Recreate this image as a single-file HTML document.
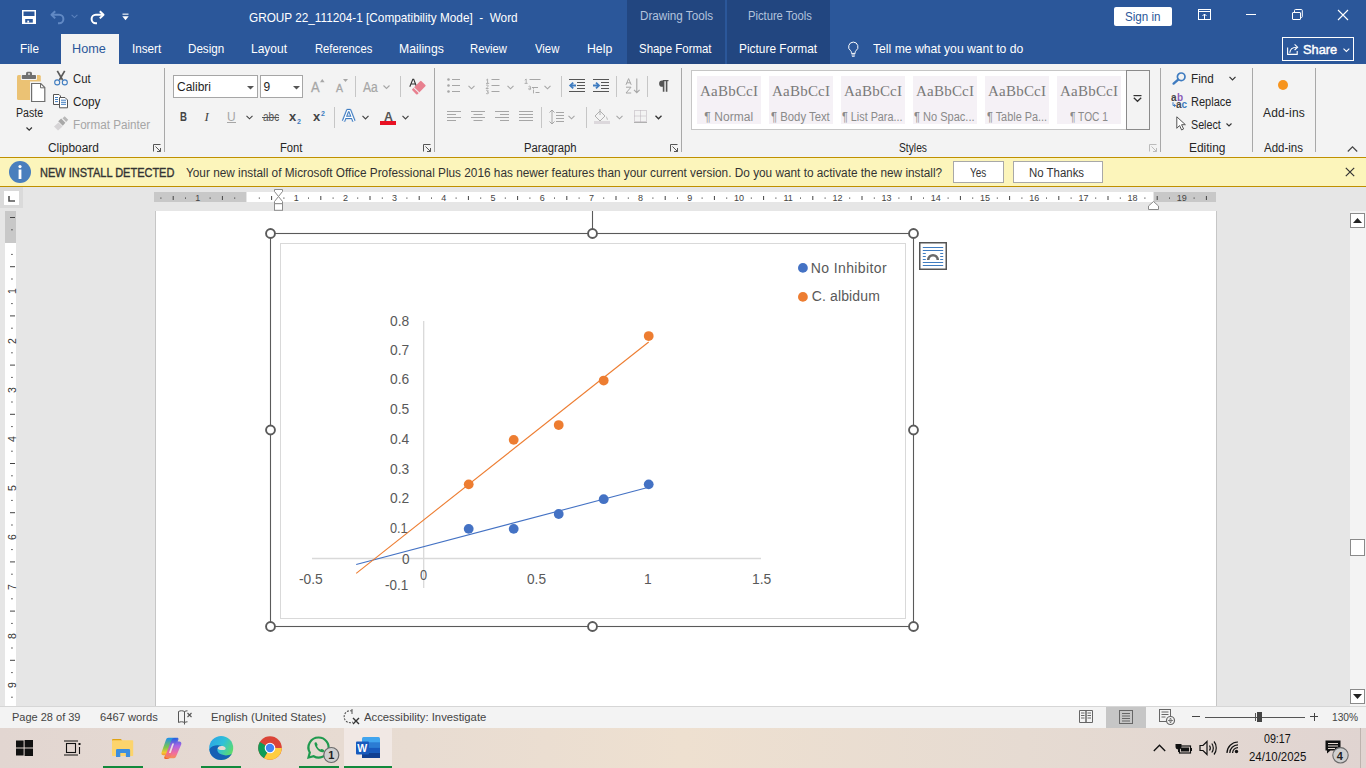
<!DOCTYPE html>
<html><head><meta charset="utf-8"><title>GROUP 22_111204-1 [Compatibility Mode] - Word</title>
<style>
html,body{margin:0;padding:0;}
body{width:1366px;height:768px;overflow:hidden;position:relative;background:#e6e6e6;font-family:"Liberation Sans",sans-serif;}
.t{position:absolute;line-height:1;white-space:pre;}
svg{overflow:visible}
</style></head><body>
<div style="position:absolute;left:0px;top:0px;width:1366px;height:64px;background:#2b579a;"></div>
<div style="position:absolute;left:627px;top:0px;width:98px;height:64px;background:#224680;"></div>
<div style="position:absolute;left:727px;top:0px;width:103px;height:64px;background:#224680;"></div>
<div style="position:absolute;left:61px;top:34px;width:58px;height:30px;background:#f3f3f3;"></div>
<svg style="position:absolute;left:22px;top:10px;" width="14" height="14" viewBox="0 0 14 14"><path d="M0.75 0.75h12.5v12.5H0.75z" fill="none" stroke="#fff" stroke-width="1.5"/><rect x="1" y="6" width="12" height="7.5" fill="#fff"/><rect x="3.2" y="9" width="7.6" height="3.6" fill="#2b579a"/><rect x="5.3" y="10.6" width="1.8" height="2" fill="#fff"/></svg>
<svg style="position:absolute;left:50px;top:10px;" width="16" height="14" viewBox="0 0 16 14"><path d="M5.2 1.2L1.5 4.8 5.2 8.4" fill="none" stroke="#6189c4" stroke-width="2" stroke-linejoin="round"/><path d="M2 4.8h7.2a4.2 4.2 0 0 1 0 8.4H8" fill="none" stroke="#6189c4" stroke-width="2"/></svg>
<svg style="position:absolute;left:71px;top:14px;" width="7" height="5" viewBox="0 0 7 5"><path d="M0.6 0.8L3.5 3.6 6.4 0.8" fill="none" stroke="#5b82bd" stroke-width="1.1"/></svg>
<svg style="position:absolute;left:90px;top:10px;" width="15" height="14" viewBox="0 0 15 14"><path d="M9.8 1.2L13.5 4.8 9.8 8.4" fill="none" stroke="#fff" stroke-width="2" stroke-linejoin="round"/><path d="M13 4.8H5.8a4.2 4.2 0 0 0 0 8.4H7" fill="none" stroke="#fff" stroke-width="2"/></svg>
<svg style="position:absolute;left:122px;top:13px;" width="7" height="8" viewBox="0 0 7 8"><rect x="0.5" y="0.6" width="6" height="1.1" fill="#fff"/><path d="M0.3 3.3h6.4L3.5 7.2z" fill="#fff"/></svg>
<div style="position:absolute;left:1114px;top:7px;width:58px;height:19px;background:#fff;border-radius:2px;"></div>
<svg style="position:absolute;left:1198px;top:9px;" width="14" height="12" viewBox="0 0 14 12"><rect x="0.5" y="0.5" width="12" height="10" fill="none" stroke="#fff" stroke-width="1"/><path d="M0.5 2.5h12" stroke="#fff"/><path d="M6.5 10.5V5M4.5 7l2-2 2 2" fill="none" stroke="#fff"/></svg>
<div style="position:absolute;left:1246px;top:14px;width:10px;height:1px;background:#fff;"></div>
<svg style="position:absolute;left:1292px;top:9px;" width="11" height="12" viewBox="0 0 11 12"><rect x="0.5" y="3.5" width="8" height="7" rx="0.5" fill="none" stroke="#fff"/><path d="M2.5 3.5V1.5a1 1 0 0 1 1-1h5.8a1 1 0 0 1 1 1v6a1 1 0 0 1-1 1H8.5" fill="none" stroke="#fff"/></svg>
<svg style="position:absolute;left:1337px;top:9px;" width="12" height="12" viewBox="0 0 12 12"><path d="M1 1l10 10M11 1L1 11" stroke="#fff" stroke-width="1.1"/></svg>
<svg style="position:absolute;left:847.2px;top:41.2px;" width="14" height="18" viewBox="0 0 14 18"><g transform="scale(0.9)"><path d="M7 1.2a5.3 5.3 0 0 0-3 9.6c.6.5.9 1.2.9 2v1h4.2v-1c0-.8.3-1.5.9-2A5.3 5.3 0 0 0 7 1.2z" fill="none" stroke="#fff" stroke-width="1.1"/><path d="M5 15.5h4M5.5 17h3" stroke="#fff" stroke-width="1"/></g></svg>
<div style="position:absolute;left:1282px;top:37px;width:72px;height:24px;background:transparent;border:1px solid #fff;box-sizing:border-box;"></div>
<svg style="position:absolute;left:1287px;top:43px;" width="12" height="12" viewBox="0 0 12 12"><path d="M0.6 4.5V11.4H10.2V8" fill="none" stroke="#fff" stroke-width="1.1"/><path d="M2.8 9.8C3 6.5 5.2 4.2 9.8 4.2" fill="none" stroke="#fff" stroke-width="1.1"/><path d="M7.6 1.4L10.6 4.2 7.6 7" fill="none" stroke="#fff" stroke-width="1.1"/></svg>
<svg style="position:absolute;left:1343px;top:47.5px;" width="7" height="4" viewBox="0 0 7 4"><path d="M0.5 0.6L3.4 3.4 6.3 0.6" fill="none" stroke="#fff" stroke-width="1.1"/></svg>
<div style="position:absolute;left:0px;top:64px;width:1366px;height:93px;background:#f3f3f3;"></div>
<div style="position:absolute;left:164px;top:68px;width:1px;height:84px;background:#a8a8a8;"></div>
<div style="position:absolute;left:434px;top:68px;width:1px;height:84px;background:#a8a8a8;"></div>
<div style="position:absolute;left:681px;top:68px;width:1px;height:84px;background:#a8a8a8;"></div>
<div style="position:absolute;left:1160px;top:68px;width:1px;height:84px;background:#a8a8a8;"></div>
<div style="position:absolute;left:1252px;top:68px;width:1px;height:84px;background:#a8a8a8;"></div>
<div style="position:absolute;left:1315px;top:68px;width:1px;height:84px;background:#a8a8a8;"></div>
<svg style="position:absolute;left:17px;top:71px;" width="29" height="31" viewBox="0 0 29 31"><rect x="0" y="4" width="23.8" height="25" rx="1.5" fill="#ebc274"/><rect x="3.8" y="3" width="16.2" height="6" rx="1" fill="#f3f3f3"/><rect x="4.8" y="4" width="14.2" height="4" rx="0.8" fill="#707070"/><rect x="9" y="0.8" width="6" height="4.5" rx="1.5" fill="#707070"/><rect x="11.2" y="2.2" width="1.6" height="1.6" fill="#f3f3f3"/><rect x="13" y="10.5" width="15.5" height="20" fill="#f3f3f3"/><path d="M14.6 12.5h9.2l4 4v14h-13.2z" fill="#fff" stroke="#6e6e6e" stroke-width="1.2"/><path d="M23.5 12.5v4.3h4.3" fill="none" stroke="#6e6e6e" stroke-width="1"/></svg>
<svg style="position:absolute;left:25.5px;top:126.5px;" width="7" height="4" viewBox="0 0 7 4"><path d="M0.5 0.5L3.2 3.2 5.9 0.5" fill="none" stroke="#333" stroke-width="1.2"/></svg>
<svg style="position:absolute;left:54px;top:70px;" width="14" height="16" viewBox="0 0 14 16"><path d="M3.3 0.8l5.3 9.2M10.7 0.8L5.4 10" stroke="#5a5a5a" stroke-width="1.7"/><circle cx="3.2" cy="12.4" r="2.5" fill="#f3f3f3" stroke="#3f7cc0" stroke-width="1.1"/><circle cx="10.8" cy="12.4" r="2.5" fill="#f3f3f3" stroke="#3f7cc0" stroke-width="1.1"/></svg>
<svg style="position:absolute;left:53px;top:94px;" width="16" height="15" viewBox="0 0 16 15"><path d="M0.5 0.5h5.5l1.5 1.5v8.5h-7z" fill="#fff" stroke="#555" stroke-width="1"/><path d="M6.5 3.5h5.5l2.5 2.5v7.8h-8z" fill="#fff" stroke="#555" stroke-width="1"/><path d="M2 3.5h3M2 5.5h3M2 7.6h3M8 6.2h5M8 8.3h5M8 10.3h5" stroke="#3f7cc0" stroke-width="1"/></svg>
<svg style="position:absolute;left:53px;top:116px;" width="16" height="15" viewBox="0 0 16 15"><path d="M1 10.5l4.5-4 4 4-4.5 4z" fill="#d6d4d6"/><path d="M5.2 5.2l3-2.6 4.2 4.2-2.6 3z" fill="#a8a8a8"/><path d="M9.5 2.2l2.2-2 3.5 3.5-2 2.2z" fill="#b8b8b8"/></svg>
<svg style="position:absolute;left:153px;top:144px;" width="8" height="8" viewBox="0 0 8 8"><path d="M0.5 7.5V0.5h7" fill="none" stroke="#555"/><path d="M2.5 2.5l5 5M7.5 4v3.5H4" fill="none" stroke="#555"/></svg>
<svg style="position:absolute;left:423px;top:144px;" width="8" height="8" viewBox="0 0 8 8"><path d="M0.5 7.5V0.5h7" fill="none" stroke="#555"/><path d="M2.5 2.5l5 5M7.5 4v3.5H4" fill="none" stroke="#555"/></svg>
<svg style="position:absolute;left:670px;top:144px;" width="8" height="8" viewBox="0 0 8 8"><path d="M0.5 7.5V0.5h7" fill="none" stroke="#555"/><path d="M2.5 2.5l5 5M7.5 4v3.5H4" fill="none" stroke="#555"/></svg>
<svg style="position:absolute;left:1149px;top:144px;" width="8" height="8" viewBox="0 0 8 8"><path d="M0.5 7.5V0.5h7" fill="none" stroke="#bbb"/><path d="M2.5 2.5l5 5M7.5 4v3.5H4" fill="none" stroke="#bbb"/></svg>
<div style="position:absolute;left:173px;top:75px;width:85px;height:23px;background:#fff;border:1px solid #a6a6a6;box-sizing:border-box;"></div>
<div style="position:absolute;left:260px;top:75px;width:43px;height:23px;background:#fff;border:1px solid #a6a6a6;box-sizing:border-box;"></div>
<svg style="position:absolute;left:247px;top:86px;" width="7" height="4" viewBox="0 0 7 4"><path d="M0 0h7L3.5 3.5z" fill="#555"/></svg>
<svg style="position:absolute;left:293px;top:86px;" width="7" height="4" viewBox="0 0 7 4"><path d="M0 0h7L3.5 3.5z" fill="#555"/></svg>
<svg style="position:absolute;left:319.5px;top:78.7px;" width="5" height="4" viewBox="0 0 5 4"><path d="M0 3.3L2.3 0 4.6 3.3z" fill="#a6a6a6"/></svg>
<svg style="position:absolute;left:343px;top:79px;" width="5" height="4" viewBox="0 0 5 4"><path d="M0 0h5L2.5 3z" fill="#a6a6a6"/></svg>
<div style="position:absolute;left:355px;top:76px;width:1px;height:21px;background:#c6c6c6;"></div>
<svg style="position:absolute;left:383px;top:85px;" width="7" height="4" viewBox="0 0 7 4"><path d="M0.5 0.5L3.5 3.5 6.5 0.5" fill="none" stroke="#a6a6a6" stroke-width="1.1"/></svg>
<div style="position:absolute;left:400px;top:76px;width:1px;height:21px;background:#c6c6c6;"></div>
<svg style="position:absolute;left:409px;top:78px;" width="17" height="17" viewBox="0 0 17 17"><path d="M0.8 8.8L3.8 1.2h0.9L7.6 8.8M1.9 6h4.6" fill="none" stroke="#333" stroke-width="1.1"/><g transform="rotate(-45 9.5 10)"><rect x="3.5" y="6.3" width="13" height="7.4" rx="1" fill="#e8808f"/><rect x="6" y="6" width="1" height="8" fill="#f3f3f3"/></g></svg>
<div style="position:absolute;left:227px;top:122px;width:9px;height:1px;background:#a6a6a6;"></div>
<svg style="position:absolute;left:246px;top:115px;" width="7" height="5" viewBox="0 0 7 5"><path d="M0.5 0.8L3.5 3.8 6.5 0.8" fill="none" stroke="#444" stroke-width="1.1"/></svg>
<div style="position:absolute;left:262px;top:117px;width:17px;height:1px;background:#555;"></div>
<div style="position:absolute;left:334px;top:107px;width:1px;height:21px;background:#c6c6c6;"></div>
<svg style="position:absolute;left:342.4px;top:108.6px;" width="16" height="17" viewBox="0 0 16 17"><g transform="scale(0.84)"><path d="M1.8 14.5L6.8 1.8h2.4l5 12.7M4.3 10h7.4" fill="none" stroke="#8fb3de" stroke-width="5" stroke-linejoin="round" opacity="0.55"/><path d="M1.8 14.5L6.8 1.8h2.4l5 12.7M4.3 10h7.4" fill="none" stroke="#3f7cc0" stroke-width="3.8" stroke-linejoin="round"/><path d="M1.8 14.5L6.8 1.8h2.4l5 12.7M4.3 10h7.4" fill="none" stroke="#fff" stroke-width="1.5" stroke-linejoin="round"/></g></svg>
<svg style="position:absolute;left:362px;top:115px;" width="7" height="5" viewBox="0 0 7 5"><path d="M0.5 0.8L3.5 3.8 6.5 0.8" fill="none" stroke="#444" stroke-width="1.2"/></svg>
<div style="position:absolute;left:380px;top:121px;width:16px;height:4px;background:#e81123;"></div>
<svg style="position:absolute;left:402px;top:115px;" width="7" height="5" viewBox="0 0 7 5"><path d="M0.5 0.8L3.5 3.8 6.5 0.8" fill="none" stroke="#444" stroke-width="1.2"/></svg>
<svg style="position:absolute;left:447px;top:78px;" width="14" height="15" viewBox="0 0 14 15"><circle cx="1.5" cy="1.5" r="1.3" fill="#a6a6a6"/><circle cx="1.5" cy="7.5" r="1.3" fill="#a6a6a6"/><circle cx="1.5" cy="13.5" r="1.3" fill="#a6a6a6"/><rect x="5" y="1" width="8" height="1" fill="#a6a6a6"/><rect x="5" y="7" width="8" height="1" fill="#a6a6a6"/><rect x="5" y="13" width="8" height="1" fill="#a6a6a6"/></svg>
<svg style="position:absolute;left:468px;top:85px;" width="7" height="5" viewBox="0 0 7 5"><path d="M0.5 0.8L3.5 3.8 6.5 0.8" fill="none" stroke="#a6a6a6" stroke-width="1.1"/></svg>
<svg style="position:absolute;left:485px;top:78px;" width="16" height="16" viewBox="0 0 16 16"><path d="M1.2 2.2L2.6 1v4.2M1 5.4h3.2M1 7.6c.4-.8 2.4-.8 2.4.3 0 .9-2.4 2.1-2.4 2.6h2.6M1 12.6c.6-.6 2.4-.6 2.4.5 0 .6-.8.8-1.4.8.8 0 1.6.3 1.6 1 0 1-1.8 1-2.6.5" fill="none" stroke="#a6a6a6" stroke-width="0.9"/><rect x="6.5" y="1" width="8" height="1" fill="#a6a6a6"/><rect x="6.5" y="7" width="8" height="1" fill="#a6a6a6"/><rect x="6.5" y="13" width="8" height="1" fill="#a6a6a6"/></svg>
<svg style="position:absolute;left:507px;top:85px;" width="7" height="5" viewBox="0 0 7 5"><path d="M0.5 0.8L3.5 3.8 6.5 0.8" fill="none" stroke="#a6a6a6" stroke-width="1.1"/></svg>
<svg style="position:absolute;left:524px;top:78px;" width="17" height="16" viewBox="0 0 17 16"><path d="M0.8 2.2L2.2 1v4.2M0.6 5.4h3M4.6 8.5c.5-.5 2-.5 2 .4v2.6M6.6 10.5c-.8-.6-2-.4-2 .4s1.2 1 2 .3M9.5 11.6v3.8M9.5 10v.8" fill="none" stroke="#a6a6a6" stroke-width="0.9"/><rect x="5.5" y="1" width="11" height="1" fill="#a6a6a6"/><rect x="8" y="9" width="6" height="1" fill="#a6a6a6"/><rect x="11.5" y="14" width="4" height="1" fill="#a6a6a6"/></svg>
<svg style="position:absolute;left:544px;top:85px;" width="7" height="5" viewBox="0 0 7 5"><path d="M0.5 0.8L3.5 3.8 6.5 0.8" fill="none" stroke="#a6a6a6" stroke-width="1.1"/></svg>
<div style="position:absolute;left:561px;top:76px;width:1px;height:21px;background:#c6c6c6;"></div>
<svg style="position:absolute;left:569px;top:79px;" width="17" height="14" viewBox="0 0 17 14"><rect x="0" y="0" width="16" height="1" fill="#555"/><rect x="8" y="3" width="8" height="1" fill="#555"/><rect x="8" y="6" width="8" height="1" fill="#555"/><rect x="8" y="9" width="8" height="1" fill="#555"/><rect x="0" y="12" width="16" height="1" fill="#555"/><path d="M1.5 6.5h5.5" stroke="#3f7cc0" stroke-width="2"/><path d="M4.2 3.6L1.2 6.5 4.2 9.4" fill="none" stroke="#3f7cc0" stroke-width="1.8"/></svg>
<svg style="position:absolute;left:593px;top:79px;" width="17" height="14" viewBox="0 0 17 14"><rect x="0" y="0" width="16" height="1" fill="#555"/><rect x="8" y="3" width="8" height="1" fill="#555"/><rect x="8" y="6" width="8" height="1" fill="#555"/><rect x="8" y="9" width="8" height="1" fill="#555"/><rect x="0" y="12" width="16" height="1" fill="#555"/><path d="M0 6.5h5.5" stroke="#3f7cc0" stroke-width="2"/><path d="M3 3.6L6 6.5 3 9.4" fill="none" stroke="#3f7cc0" stroke-width="1.8"/></svg>
<div style="position:absolute;left:616px;top:76px;width:1px;height:21px;background:#c6c6c6;"></div>
<svg style="position:absolute;left:625px;top:78px;" width="15" height="16" viewBox="0 0 15 16"><path d="M1 6.8L3.6 0.6 6.2 6.8M1.9 4.8h3.4M1 9.2h5L1 15h5.2" fill="none" stroke="#a6a6a6" stroke-width="1"/><path d="M11.8 0.5v14M9 11.8l2.8 2.8 2.8-2.8" fill="none" stroke="#a6a6a6" stroke-width="1.1"/></svg>
<div style="position:absolute;left:647px;top:76px;width:1px;height:21px;background:#c6c6c6;"></div>
<svg style="position:absolute;left:658px;top:80px;" width="11" height="12" viewBox="0 0 11 12"><path d="M5 0.6h5.5" stroke="#555" stroke-width="1.2"/><path d="M4.2 0.6A3.1 3.1 0 0 0 4.2 6.8h1V0.6z" fill="#555"/><path d="M5.6 0.6v11.2M8.6 0.6v11.2" stroke="#555" stroke-width="1.6"/></svg>
<svg style="position:absolute;left:447px;top:111px;" width="15" height="11" viewBox="0 0 15 11"><rect x="0" y="0" width="14" height="1" fill="#a6a6a6"/><rect x="0" y="3" width="9" height="1" fill="#a6a6a6"/><rect x="0" y="6" width="14" height="1" fill="#a6a6a6"/><rect x="0" y="9" width="9" height="1" fill="#a6a6a6"/></svg>
<svg style="position:absolute;left:471px;top:111px;" width="15" height="11" viewBox="0 0 15 11"><rect x="0.0" y="0" width="14" height="1" fill="#a6a6a6"/><rect x="2.5" y="3" width="9" height="1" fill="#a6a6a6"/><rect x="0.0" y="6" width="14" height="1" fill="#a6a6a6"/><rect x="2.5" y="9" width="9" height="1" fill="#a6a6a6"/></svg>
<svg style="position:absolute;left:495px;top:111px;" width="15" height="11" viewBox="0 0 15 11"><rect x="0" y="0" width="14" height="1" fill="#a6a6a6"/><rect x="5" y="3" width="9" height="1" fill="#a6a6a6"/><rect x="0" y="6" width="14" height="1" fill="#a6a6a6"/><rect x="5" y="9" width="9" height="1" fill="#a6a6a6"/></svg>
<svg style="position:absolute;left:519px;top:111px;" width="15" height="11" viewBox="0 0 15 11"><rect x="0" y="0" width="14" height="1" fill="#a6a6a6"/><rect x="0" y="3" width="14" height="1" fill="#a6a6a6"/><rect x="0" y="6" width="14" height="1" fill="#a6a6a6"/><rect x="0" y="9" width="14" height="1" fill="#a6a6a6"/></svg>
<div style="position:absolute;left:541px;top:107px;width:1px;height:21px;background:#c6c6c6;"></div>
<svg style="position:absolute;left:549px;top:109px;" width="16" height="16" viewBox="0 0 16 16"><path d="M3 1v14M0.5 3.5L3 1l2.5 2.5M0.5 12.5L3 15l2.5-2.5" fill="none" stroke="#a6a6a6" stroke-width="1"/><rect x="7" y="3" width="8" height="1" fill="#a6a6a6"/><rect x="7" y="6" width="8" height="1" fill="#a6a6a6"/><rect x="7" y="9" width="8" height="1" fill="#a6a6a6"/><rect x="7" y="12" width="8" height="1" fill="#a6a6a6"/></svg>
<svg style="position:absolute;left:568px;top:115px;" width="7" height="5" viewBox="0 0 7 5"><path d="M0.5 0.8L3.5 3.8 6.5 0.8" fill="none" stroke="#a6a6a6" stroke-width="1.1"/></svg>
<div style="position:absolute;left:586px;top:107px;width:1px;height:21px;background:#c6c6c6;"></div>
<svg style="position:absolute;left:594px;top:109px;" width="17" height="16" viewBox="0 0 17 16"><path d="M1 7l5-5 5 5-5 5z" fill="none" stroke="#b0b0b0" stroke-width="1"/><path d="M6 0v6" stroke="#b0b0b0"/><path d="M12 7c2 2 2 4 1 4" fill="#b0b0b0"/><rect x="0" y="12" width="16" height="3" fill="#dcd8dc"/></svg>
<svg style="position:absolute;left:616px;top:115px;" width="7" height="5" viewBox="0 0 7 5"><path d="M0.5 0.8L3.5 3.8 6.5 0.8" fill="none" stroke="#a6a6a6" stroke-width="1.1"/></svg>
<svg style="position:absolute;left:634px;top:110px;" width="14" height="13" viewBox="0 0 14 13"><path d="M0.5 0.5h12v11h-12zM6.5 0.5v11M0.5 6h12" fill="none" stroke="#b8b0b8" stroke-width="1" stroke-dasharray="1 1"/><rect x="0" y="12" width="13" height="1" fill="#b0b0b0"/></svg>
<svg style="position:absolute;left:655px;top:115px;" width="7" height="5" viewBox="0 0 7 5"><path d="M0.5 0.8L3.5 3.8 6.5 0.8" fill="none" stroke="#333" stroke-width="1.3"/></svg>
<div style="position:absolute;left:691px;top:70px;width:459px;height:60px;background:#fff;border:1px solid #c6c6c6;box-sizing:border-box;"></div>
<div style="position:absolute;left:697px;top:76px;width:64px;height:48px;background:#f5f1f6;"></div>
<div style="position:absolute;left:769px;top:76px;width:64px;height:48px;background:#f5f1f6;"></div>
<div style="position:absolute;left:841px;top:76px;width:64px;height:48px;background:#f5f1f6;"></div>
<div style="position:absolute;left:913px;top:76px;width:64px;height:48px;background:#f5f1f6;"></div>
<div style="position:absolute;left:985px;top:76px;width:64px;height:48px;background:#f5f1f6;"></div>
<div style="position:absolute;left:1057px;top:76px;width:64px;height:48px;background:#f5f1f6;"></div>
<div style="position:absolute;left:1126px;top:70px;width:24px;height:60px;background:#f3f3f3;border:1px solid #8a8a8a;box-sizing:border-box;"></div>
<svg style="position:absolute;left:1133px;top:95px;" width="9" height="7" viewBox="0 0 9 7"><rect x="0.5" y="0" width="8" height="1.2" fill="#333"/><path d="M0.8 2.8L4.5 6.3 8.2 2.8" fill="none" stroke="#333" stroke-width="1.3"/></svg>
<svg style="position:absolute;left:1172px;top:72px;" width="15" height="13" viewBox="0 0 15 13"><circle cx="9.2" cy="4.8" r="3.8" fill="none" stroke="#3f7cc0" stroke-width="1.7"/><path d="M6.2 7.6L1.6 11.6" stroke="#3f7cc0" stroke-width="2.4" stroke-linecap="round"/></svg>
<svg style="position:absolute;left:1229px;top:76px;" width="7" height="5" viewBox="0 0 7 5"><path d="M0.5 0.8L3.5 3.8 6.5 0.8" fill="none" stroke="#333" stroke-width="1.2"/></svg>
<svg style="position:absolute;left:1171px;top:93px;" width="18" height="16" viewBox="0 0 18 16"><text x="0" y="7.6" font-size="10" font-weight="700" fill="#444" font-family="Liberation Sans">a</text><text x="6" y="7.6" font-size="10" font-weight="700" fill="#8a5cb8" font-family="Liberation Sans">b</text><text x="5" y="15.2" font-size="10" font-weight="700" fill="#444" font-family="Liberation Sans">a</text><text x="10.6" y="15.2" font-size="10" font-weight="700" fill="#3f7cc0" font-family="Liberation Sans">c</text><path d="M2 9.2v3.3h2.6M3.2 11.2l1.5 1.3-1.5 1.3" fill="none" stroke="#3f7cc0" stroke-width="1"/></svg>
<svg style="position:absolute;left:1176px;top:116px;" width="10" height="15" viewBox="0 0 10 15"><path d="M0.8 0.8v11.5l2.8-2.8 2 4.5 2-1-2-4.3h3.8z" fill="#fff" stroke="#555" stroke-width="1"/></svg>
<svg style="position:absolute;left:1226px;top:123px;" width="6" height="4" viewBox="0 0 6 4"><path d="M0.5 0.5L3 3 5.5 0.5" fill="none" stroke="#333" stroke-width="1.1"/></svg>
<svg style="position:absolute;left:1277px;top:79px;" width="12" height="12" viewBox="0 0 12 12"><circle cx="6" cy="6" r="5" fill="#f7941d"/></svg>
<svg style="position:absolute;left:1347px;top:146px;" width="11" height="6" viewBox="0 0 11 6"><path d="M0.8 5.5L5.5 0.8 10.2 5.5" fill="none" stroke="#444" stroke-width="1.2"/></svg>
<div style="position:absolute;left:0px;top:157px;width:1366px;height:30px;background:#fcf5bb;border-top:1px solid #bf9000;border-bottom:1px solid #bf9000;box-sizing:border-box;"></div>
<svg style="position:absolute;left:9px;top:161px;" width="22" height="22" viewBox="0 0 22 22"><circle cx="11" cy="11" r="11" fill="#4a7fbd"/><circle cx="11" cy="5.6" r="1.6" fill="#fff"/><rect x="9.6" y="8.5" width="2.8" height="9.5" fill="#fff"/></svg>
<div style="position:absolute;left:953px;top:161px;width:51px;height:22px;background:#fff;border:1px solid #a8a8a8;box-sizing:border-box;"></div>
<div style="position:absolute;left:1013px;top:161px;width:90px;height:22px;background:#fff;border:1px solid #a8a8a8;box-sizing:border-box;"></div>
<svg style="position:absolute;left:1345px;top:167px;" width="10" height="10" viewBox="0 0 10 10"><path d="M0.8 0.8l8.4 8.4M9.2 0.8L0.8 9.2" stroke="#333" stroke-width="1.2"/></svg>
<div style="position:absolute;left:0px;top:187px;width:23px;height:21px;background:#dadada;"></div>
<div style="position:absolute;left:4px;top:191px;width:15px;height:14px;background:#fff;"></div>
<svg style="position:absolute;left:8px;top:196px;" width="7" height="6" viewBox="0 0 7 6"><path d="M1 0v5h6" fill="none" stroke="#555" stroke-width="1.6"/></svg>
<div style="position:absolute;left:154px;top:192px;width:92px;height:10px;background:#c8c8c8;"></div>
<div style="position:absolute;left:247px;top:192px;width:906px;height:10px;background:#fff;"></div>
<div style="position:absolute;left:1154px;top:192px;width:62px;height:10px;background:#c8c8c8;"></div>
<svg style="position:absolute;left:154px;top:192px;" width="1062" height="10" viewBox="0 0 1062 10"><rect x="6.40" y="5.5" width="1" height="1.2" fill="#444"/><rect x="18.70" y="4" width="1" height="4" fill="#444"/><rect x="31.00" y="5.5" width="1" height="1.2" fill="#444"/><rect x="55.60" y="5.5" width="1" height="1.2" fill="#444"/><rect x="67.90" y="4" width="1" height="4" fill="#444"/><rect x="80.20" y="5.5" width="1" height="1.2" fill="#444"/><rect x="104.80" y="5.5" width="1" height="1.2" fill="#444"/><rect x="117.10" y="4" width="1" height="4" fill="#444"/><rect x="129.40" y="5.5" width="1" height="1.2" fill="#444"/><rect x="154.00" y="5.5" width="1" height="1.2" fill="#444"/><rect x="166.30" y="4" width="1" height="4" fill="#444"/><rect x="178.60" y="5.5" width="1" height="1.2" fill="#444"/><rect x="203.20" y="5.5" width="1" height="1.2" fill="#444"/><rect x="215.50" y="4" width="1" height="4" fill="#444"/><rect x="227.80" y="5.5" width="1" height="1.2" fill="#444"/><rect x="252.40" y="5.5" width="1" height="1.2" fill="#444"/><rect x="264.70" y="4" width="1" height="4" fill="#444"/><rect x="277.00" y="5.5" width="1" height="1.2" fill="#444"/><rect x="301.60" y="5.5" width="1" height="1.2" fill="#444"/><rect x="313.90" y="4" width="1" height="4" fill="#444"/><rect x="326.20" y="5.5" width="1" height="1.2" fill="#444"/><rect x="350.80" y="5.5" width="1" height="1.2" fill="#444"/><rect x="363.10" y="4" width="1" height="4" fill="#444"/><rect x="375.40" y="5.5" width="1" height="1.2" fill="#444"/><rect x="400.00" y="5.5" width="1" height="1.2" fill="#444"/><rect x="412.30" y="4" width="1" height="4" fill="#444"/><rect x="424.60" y="5.5" width="1" height="1.2" fill="#444"/><rect x="449.20" y="5.5" width="1" height="1.2" fill="#444"/><rect x="461.50" y="4" width="1" height="4" fill="#444"/><rect x="473.80" y="5.5" width="1" height="1.2" fill="#444"/><rect x="498.40" y="5.5" width="1" height="1.2" fill="#444"/><rect x="510.70" y="4" width="1" height="4" fill="#444"/><rect x="523.00" y="5.5" width="1" height="1.2" fill="#444"/><rect x="547.60" y="5.5" width="1" height="1.2" fill="#444"/><rect x="559.90" y="4" width="1" height="4" fill="#444"/><rect x="572.20" y="5.5" width="1" height="1.2" fill="#444"/><rect x="596.80" y="5.5" width="1" height="1.2" fill="#444"/><rect x="609.10" y="4" width="1" height="4" fill="#444"/><rect x="621.40" y="5.5" width="1" height="1.2" fill="#444"/><rect x="646.00" y="5.5" width="1" height="1.2" fill="#444"/><rect x="658.30" y="4" width="1" height="4" fill="#444"/><rect x="670.60" y="5.5" width="1" height="1.2" fill="#444"/><rect x="695.20" y="5.5" width="1" height="1.2" fill="#444"/><rect x="707.50" y="4" width="1" height="4" fill="#444"/><rect x="719.80" y="5.5" width="1" height="1.2" fill="#444"/><rect x="744.40" y="5.5" width="1" height="1.2" fill="#444"/><rect x="756.70" y="4" width="1" height="4" fill="#444"/><rect x="769.00" y="5.5" width="1" height="1.2" fill="#444"/><rect x="793.60" y="5.5" width="1" height="1.2" fill="#444"/><rect x="805.90" y="4" width="1" height="4" fill="#444"/><rect x="818.20" y="5.5" width="1" height="1.2" fill="#444"/><rect x="842.80" y="5.5" width="1" height="1.2" fill="#444"/><rect x="855.10" y="4" width="1" height="4" fill="#444"/><rect x="867.40" y="5.5" width="1" height="1.2" fill="#444"/><rect x="892.00" y="5.5" width="1" height="1.2" fill="#444"/><rect x="904.30" y="4" width="1" height="4" fill="#444"/><rect x="916.60" y="5.5" width="1" height="1.2" fill="#444"/><rect x="941.20" y="5.5" width="1" height="1.2" fill="#444"/><rect x="953.50" y="4" width="1" height="4" fill="#444"/><rect x="965.80" y="5.5" width="1" height="1.2" fill="#444"/><rect x="990.40" y="5.5" width="1" height="1.2" fill="#444"/><rect x="1002.70" y="4" width="1" height="4" fill="#444"/><rect x="1015.00" y="5.5" width="1" height="1.2" fill="#444"/><rect x="1039.60" y="5.5" width="1" height="1.2" fill="#444"/><rect x="1051.90" y="4" width="1" height="4" fill="#444"/></svg>
<svg style="position:absolute;left:274px;top:189px;" width="9" height="22" viewBox="0 0 9 22"><path d="M0.5 0.5h8v2L4.5 7.5 0.5 2.5z" fill="#fff" stroke="#8a8a8a"/><path d="M4.5 7.5L0.5 12.5v2.2h8v-2.2z" fill="#fff" stroke="#8a8a8a"/><rect x="0.5" y="14.7" width="8" height="6.6" fill="#fff" stroke="#8a8a8a"/></svg>
<svg style="position:absolute;left:1148px;top:201px;" width="11" height="9" viewBox="0 0 11 9"><path d="M5.5 0.5L0.5 5v3.5h10V5z" fill="#fff" stroke="#8a8a8a"/></svg>
<div style="position:absolute;left:5px;top:211px;width:11px;height:32px;background:#c8c8c8;"></div>
<div style="position:absolute;left:5px;top:243px;width:11px;height:464px;background:#fff;"></div>
<svg style="position:absolute;left:5px;top:211px;" width="11" height="495" viewBox="0 0 11 495"><rect x="5" y="6.00" width="5" height="1" fill="#444"/><rect x="6.2" y="18.30" width="1.5" height="1" fill="#444"/><rect x="6.2" y="42.90" width="1.5" height="1" fill="#444"/><rect x="5" y="55.20" width="5" height="1" fill="#444"/><rect x="6.2" y="67.50" width="1.5" height="1" fill="#444"/><rect x="6.2" y="92.10" width="1.5" height="1" fill="#444"/><rect x="5" y="104.40" width="5" height="1" fill="#444"/><rect x="6.2" y="116.70" width="1.5" height="1" fill="#444"/><rect x="6.2" y="141.30" width="1.5" height="1" fill="#444"/><rect x="5" y="153.60" width="5" height="1" fill="#444"/><rect x="6.2" y="165.90" width="1.5" height="1" fill="#444"/><rect x="6.2" y="190.50" width="1.5" height="1" fill="#444"/><rect x="5" y="202.80" width="5" height="1" fill="#444"/><rect x="6.2" y="215.10" width="1.5" height="1" fill="#444"/><rect x="6.2" y="239.70" width="1.5" height="1" fill="#444"/><rect x="5" y="252.00" width="5" height="1" fill="#444"/><rect x="6.2" y="264.30" width="1.5" height="1" fill="#444"/><rect x="6.2" y="288.90" width="1.5" height="1" fill="#444"/><rect x="5" y="301.20" width="5" height="1" fill="#444"/><rect x="6.2" y="313.50" width="1.5" height="1" fill="#444"/><rect x="6.2" y="338.10" width="1.5" height="1" fill="#444"/><rect x="5" y="350.40" width="5" height="1" fill="#444"/><rect x="6.2" y="362.70" width="1.5" height="1" fill="#444"/><rect x="6.2" y="387.30" width="1.5" height="1" fill="#444"/><rect x="5" y="399.60" width="5" height="1" fill="#444"/><rect x="6.2" y="411.90" width="1.5" height="1" fill="#444"/><rect x="6.2" y="436.50" width="1.5" height="1" fill="#444"/><rect x="5" y="448.80" width="5" height="1" fill="#444"/><rect x="6.2" y="461.10" width="1.5" height="1" fill="#444"/><rect x="6.2" y="485.70" width="1.5" height="1" fill="#444"/></svg>
<div class="t" style="left:1.0999999999999996px;top:286.3px;width:21px;height:10px;font-size:10.5px;color:#333;text-align:center;transform:rotate(-90deg);line-height:10px;">1</div>
<div class="t" style="left:1.0999999999999996px;top:335.5px;width:21px;height:10px;font-size:10.5px;color:#333;text-align:center;transform:rotate(-90deg);line-height:10px;">2</div>
<div class="t" style="left:1.0999999999999996px;top:384.70000000000005px;width:21px;height:10px;font-size:10.5px;color:#333;text-align:center;transform:rotate(-90deg);line-height:10px;">3</div>
<div class="t" style="left:1.0999999999999996px;top:433.9px;width:21px;height:10px;font-size:10.5px;color:#333;text-align:center;transform:rotate(-90deg);line-height:10px;">4</div>
<div class="t" style="left:1.0999999999999996px;top:483.1px;width:21px;height:10px;font-size:10.5px;color:#333;text-align:center;transform:rotate(-90deg);line-height:10px;">5</div>
<div class="t" style="left:1.0999999999999996px;top:532.3000000000001px;width:21px;height:10px;font-size:10.5px;color:#333;text-align:center;transform:rotate(-90deg);line-height:10px;">6</div>
<div class="t" style="left:1.0999999999999996px;top:581.5px;width:21px;height:10px;font-size:10.5px;color:#333;text-align:center;transform:rotate(-90deg);line-height:10px;">7</div>
<div class="t" style="left:1.0999999999999996px;top:630.7px;width:21px;height:10px;font-size:10.5px;color:#333;text-align:center;transform:rotate(-90deg);line-height:10px;">8</div>
<div class="t" style="left:1.0999999999999996px;top:679.9px;width:21px;height:10px;font-size:10.5px;color:#333;text-align:center;transform:rotate(-90deg);line-height:10px;">9</div>
<div style="position:absolute;left:155px;top:211px;width:1062px;height:496px;background:#fff;border-left:1px solid #c6c6c6;border-right:1px solid #c6c6c6;box-sizing:border-box;"></div>
<div style="position:absolute;left:1350px;top:211px;width:16px;height:496px;background:#f3f3f3;"></div>
<div style="position:absolute;left:1350px;top:213px;width:15px;height:15px;background:#fff;border:1px solid #8a8a8a;box-sizing:border-box;"></div>
<svg style="position:absolute;left:1353px;top:218px;" width="9" height="5" viewBox="0 0 9 5"><path d="M0 5L4.5 0 9 5z" fill="#222"/></svg>
<div style="position:absolute;left:1350px;top:689px;width:15px;height:15px;background:#fff;border:1px solid #8a8a8a;box-sizing:border-box;"></div>
<svg style="position:absolute;left:1353px;top:694px;" width="9" height="5" viewBox="0 0 9 5"><path d="M0 0h9L4.5 5z" fill="#222"/></svg>
<div style="position:absolute;left:1350px;top:539px;width:15px;height:17px;background:#fff;border:1px solid #8a8a8a;box-sizing:border-box;"></div>
<svg style="position:absolute;left:0px;top:0px;pointer-events:none;" width="1366" height="768" viewBox="0 0 1366 768"><rect x="280.5" y="243.5" width="625" height="375" fill="#fff" stroke="#d9d9d9" stroke-width="1"/><path d="M312 558.5H761" stroke="#d9d9d9" stroke-width="1.3"/><path d="M423.7 321V588" stroke="#d9d9d9" stroke-width="1.3"/><path d="M356.2 564.432L648.7 487.31600000000003" stroke="#4472c4" stroke-width="1.1"/><path d="M356.2 573.33L648.7 341.98199999999997" stroke="#ed7d31" stroke-width="1.1"/><circle cx="468.7" cy="528.84" r="4.9" fill="#4472c4"/><circle cx="513.7" cy="528.84" r="4.9" fill="#4472c4"/><circle cx="558.7" cy="514.01" r="4.9" fill="#4472c4"/><circle cx="603.7" cy="499.18" r="4.9" fill="#4472c4"/><circle cx="648.7" cy="484.35" r="4.9" fill="#4472c4"/><circle cx="468.7" cy="484.35" r="4.9" fill="#ed7d31"/><circle cx="513.7" cy="439.86" r="4.9" fill="#ed7d31"/><circle cx="558.7" cy="425.03" r="4.9" fill="#ed7d31"/><circle cx="603.7" cy="380.53999999999996" r="4.9" fill="#ed7d31"/><circle cx="648.7" cy="336.04999999999995" r="4.9" fill="#ed7d31"/><circle cx="802.9" cy="267.9" r="4.9" fill="#4472c4"/><circle cx="802.9" cy="296.9" r="4.9" fill="#ed7d31"/><rect x="270.5" y="233.5" width="643" height="393" fill="none" stroke="#5a5a5a" stroke-width="1.1"/><path d="M592.5 211V233" stroke="#5a5a5a" stroke-width="1.1"/><circle cx="270.5" cy="233.5" r="4.45" fill="#fff" stroke="#5a5a5a" stroke-width="1.9"/><circle cx="270.5" cy="430" r="4.45" fill="#fff" stroke="#5a5a5a" stroke-width="1.9"/><circle cx="270.5" cy="626.5" r="4.45" fill="#fff" stroke="#5a5a5a" stroke-width="1.9"/><circle cx="592.5" cy="233.5" r="4.45" fill="#fff" stroke="#5a5a5a" stroke-width="1.9"/><circle cx="592.5" cy="626.5" r="4.45" fill="#fff" stroke="#5a5a5a" stroke-width="1.9"/><circle cx="913.5" cy="233.5" r="4.45" fill="#fff" stroke="#5a5a5a" stroke-width="1.9"/><circle cx="913.5" cy="430" r="4.45" fill="#fff" stroke="#5a5a5a" stroke-width="1.9"/><circle cx="913.5" cy="626.5" r="4.45" fill="#fff" stroke="#5a5a5a" stroke-width="1.9"/></svg>
<svg style="position:absolute;left:919px;top:242px;" width="28" height="28" viewBox="0 0 28 28"><rect x="0.75" y="0.75" width="26.5" height="26.5" fill="#fff" stroke="#555" stroke-width="1.5"/><path d="M3.8 5.5h20.4M3.8 8.5h20.4M3.8 20.5h20.4M3.8 23.5h20.4M3.8 11.5h3M3.8 14.5h3M3.8 17.5h3M21.2 11.5h3M21.2 14.5h3M21.2 17.5h3" stroke="#3f7cc0" stroke-width="1"/><path d="M9.2 18a4.8 4.8 0 0 1 9.6 0" fill="none" stroke="#6a6a6a" stroke-width="2.6"/></svg>
<div style="position:absolute;left:0px;top:706px;width:1366px;height:22px;background:#f3f3f3;border-top:1px solid #d6d6d6;box-sizing:border-box;"></div>
<svg style="position:absolute;left:178px;top:710px;" width="15" height="15" viewBox="0 0 15 15"><path d="M0.5 1.5c2-1 4-1 6 0v11c-2-1-4-1-6 0zM6.5 1.5c1-.5 2-.7 3-.7M6.5 12.5c1-.5 2-.7 3-.7" fill="none" stroke="#555" stroke-width="1"/><path d="M9.5 3l4 4M13.5 3l-4 4" stroke="#555" stroke-width="1.1"/><path d="M6.5 12.5v2" stroke="#555"/></svg>
<svg style="position:absolute;left:344px;top:709px;" width="17" height="17" viewBox="0 0 17 17"><path d="M8 2a6 6 0 1 0 1 11" fill="none" stroke="#555" stroke-width="1.1" stroke-dasharray="2 1.2"/><path d="M8 0v5" stroke="#555"/><path d="M9 9l6 6M15 9l-6 6" stroke="#333" stroke-width="1.4"/></svg>
<svg style="position:absolute;left:1079px;top:710px;" width="14" height="13" viewBox="0 0 14 13"><path d="M0.5 0.5h6.5v12H0.5zM7 0.5h6.5v12H7z" fill="none" stroke="#666"/><path d="M2 3h3.5M2 5.5h3.5M2 8h3.5M8.5 3H12M8.5 5.5H12M8.5 8H12" stroke="#666"/></svg>
<div style="position:absolute;left:1106px;top:707px;width:40px;height:21px;background:#c6c6c6;"></div>
<svg style="position:absolute;left:1119px;top:710px;" width="14" height="14" viewBox="0 0 14 14"><rect x="0.5" y="0.5" width="13" height="13" fill="none" stroke="#666"/><path d="M3 3.5h8M3 6h8M3 8.5h8M3 11h8" stroke="#666"/></svg>
<svg style="position:absolute;left:1159px;top:709px;" width="16" height="16" viewBox="0 0 16 16"><rect x="0.5" y="0.5" width="11" height="12" fill="none" stroke="#666"/><path d="M2.5 3h7M2.5 5.5h7M2.5 8h4" stroke="#666"/><circle cx="11.5" cy="11.5" r="4" fill="#f3f3f3" stroke="#666" stroke-width="1.2"/><path d="M9 11.5h5M11.5 9c-1 1.5-1 3.5 0 5M11.5 9c1 1.5 1 3.5 0 5" stroke="#666" stroke-width=".8" fill="none"/></svg>
<div style="position:absolute;left:1192px;top:716px;width:8px;height:1px;background:#444;"></div>
<div style="position:absolute;left:1205px;top:717px;width:100px;height:1px;background:#555;"></div>
<div style="position:absolute;left:1255px;top:713px;width:1px;height:8px;background:#555;"></div>
<div style="position:absolute;left:1257px;top:712px;width:5px;height:10px;background:#444;"></div>
<div style="position:absolute;left:1310px;top:716px;width:8px;height:1px;background:#444;"></div>
<div style="position:absolute;left:1313.5px;top:712.5px;width:1px;height:8px;background:#444;"></div>
<div style="position:absolute;left:0px;top:728px;width:1366px;height:40px;background:linear-gradient(90deg,#e2d6d1 0%,#e8dcd2 30%,#eee0d0 50%,#e6dbd2 75%,#e0d4d1 100%);"></div>
<svg style="position:absolute;left:16px;top:740px;" width="17" height="16" viewBox="0 0 17 16"><rect x="0" y="0.5" width="7.6" height="7" fill="#111"/><rect x="8.6" y="0" width="8.4" height="7.5" fill="#111"/><rect x="0" y="8.5" width="7.6" height="7" fill="#111"/><rect x="8.6" y="8.5" width="8.4" height="7.5" fill="#111"/></svg>
<svg style="position:absolute;left:64px;top:740px;" width="17" height="16" viewBox="0 0 17 16"><rect x="2.5" y="3.5" width="9" height="9" fill="none" stroke="#111" stroke-width="1.1"/><path d="M0 1h14M0 15h14" stroke="#111" stroke-width="1.1"/><rect x="14.5" y="3" width="2" height="2" fill="#111"/><path d="M15.5 7v7" stroke="#111" stroke-width="1.1"/></svg>
<svg style="position:absolute;left:112px;top:739px;" width="22" height="18" viewBox="0 0 22 18"><path d="M0 1a1 1 0 0 1 1-1h8l1.5 2.2H0z" fill="#e0a312"/><rect x="0" y="1.2" width="21.2" height="15.8" rx="0.8" fill="#fcd46c"/><path d="M4 18V11.3a1.3 1.3 0 0 1 1.3-1.3h11.5a1.3 1.3 0 0 1 1.3 1.3V18h-4.2v-4h-5.6v4z" fill="#3c8ede"/></svg>
<div style="position:absolute;left:103px;top:766px;width:40px;height:2px;background:#128a3c;"></div>
<svg style="position:absolute;left:161px;top:737px;" width="22" height="22" viewBox="0 0 22 22"><defs><linearGradient id="cpa" x1="0" y1="0" x2="0" y2="1"><stop offset="0" stop-color="#1b8ff0"/><stop offset=".45" stop-color="#7fc64a"/><stop offset=".7" stop-color="#f5c532"/><stop offset="1" stop-color="#f05a28"/></linearGradient><linearGradient id="cpb" x1="0" y1="0" x2="0" y2="1"><stop offset="0" stop-color="#1e5ee0"/><stop offset=".4" stop-color="#a95ae6"/><stop offset=".75" stop-color="#f2649a"/><stop offset="1" stop-color="#f78a4a"/></linearGradient></defs><path d="M7.5 0.8h6.2c1.8 0 2.6 1.4 2 3L9.8 19.5c-.6 1.6-2 2.4-3.6 2.4H4.5c-1 0-1.6-.6-1.3-1.6L4 18.2H2.6C.8 18.2 0 16.9.6 15.2L4.8 3.3C5.4 1.6 6 .8 7.5.8z" fill="url(#cpa)"/><path d="M14.5 0.8h1.6c1 0 1.6.6 1.3 1.6l-.7 2.1h1.5c1.8 0 2.6 1.4 2 3L15.5 18.6c-.6 1.6-1.2 2.6-2.7 2.6H6.6c-1.8 0-2.6-1.4-2-3L10.4 3.2C11 1.6 12.9.8 14.5.8z" fill="url(#cpb)" opacity=".92"/><path d="M11.3 6.5h1.8l-3.4 9.5H7.9z" fill="#f3ece6" opacity=".9"/></svg>
<svg style="position:absolute;left:209px;top:736px;" width="25" height="25" viewBox="0 0 25 25"><defs><linearGradient id="eg" x1="0" y1="0" x2="1" y2="0.6"><stop offset="0" stop-color="#2b9fe8"/><stop offset=".55" stop-color="#2fc0d8"/><stop offset="1" stop-color="#5ddc6a"/></linearGradient></defs><circle cx="12.2" cy="12" r="12" fill="url(#eg)"/><path d="M0.4 13.2C0.6 19.8 6 24 12.2 24c4.6 0 8.6-2.4 10.6-6.2-2.6 1.6-6.6 2.2-10 .8C9 17.2 7.6 14.6 8.6 12.2c.8-1.8 2.8-2.6 4.4-2.4C8 8.4 2 9.6.4 13.2z" fill="#1560b4"/><path d="M8.6 12.2c.9-1.9 3.3-2.7 5.2-2.1 1.7.5 2.9 1.6 2.9 2.6 0 .9-1.4 1.4-3.2 1.4-2.5 0-4.2-.5-4.9-1.9z" fill="#e6dad2"/></svg>
<div style="position:absolute;left:201px;top:766px;width:40px;height:2px;background:#128a3c;"></div>
<svg style="position:absolute;left:258px;top:736px;" width="24" height="24" viewBox="0 0 24 24"><circle cx="12" cy="12" r="11.8" fill="#db4437"/><path d="M12 12L1.8 6.1A11.8 11.8 0 0 0 6.1 22.2z" fill="#0f9d58"/><path d="M12 12L6.1 22.2A11.8 11.8 0 0 0 23.8 12z" fill="#ffcd40"/><circle cx="12" cy="12" r="5.3" fill="#fff"/><circle cx="12" cy="12" r="4.2" fill="#4285f4"/></svg>
<svg style="position:absolute;left:307px;top:736px;" width="33" height="30" viewBox="0 0 33 30"><path d="M11.5 1.5a10 10 0 0 0-8.7 15L1.5 21.5l5.2-1.3A10 10 0 1 0 11.5 1.5z" fill="none" stroke="#1f9a4e" stroke-width="2.2"/><path d="M7.5 7c.5-1 1.5-1 2-.5l1 2c.2.5 0 1-.5 1.5.5 1.5 2 3 3.5 3.5.5-.5 1-.7 1.5-.5l2 1c.5.5.5 1.5-.5 2-3 1.5-9-4-9-9z" fill="#1f9a4e"/><circle cx="24.3" cy="19" r="7.5" fill="#cfcfcf" stroke="#6a6a6a" stroke-width="1.2"/><text x="21.3" y="23" font-size="11" font-weight="700" fill="#222" font-family="Liberation Sans">1</text></svg>
<div style="position:absolute;left:299px;top:766px;width:40px;height:2px;background:#128a3c;"></div>
<div style="position:absolute;left:344px;top:728px;width:48px;height:40px;background:#f1e8e4;"></div>
<svg style="position:absolute;left:356px;top:737px;" width="25" height="22" viewBox="0 0 25 22"><rect x="6" y="0" width="18" height="21" rx="1.5" fill="#41a5ee"/><rect x="6" y="5.3" width="18" height="5.3" fill="#2b7cd3"/><rect x="6" y="10.6" width="18" height="5.3" fill="#185abd"/><rect x="6" y="15.9" width="18" height="5.1" fill="#103f91"/><rect x="0" y="4.5" width="13" height="13" rx="1" fill="#185abd"/><text x="1.3" y="15" font-size="10.5" font-weight="700" fill="#fff" font-family="Liberation Sans">W</text></svg>
<div style="position:absolute;left:344px;top:766px;width:48px;height:2px;background:#128a3c;"></div>
<svg style="position:absolute;left:1153px;top:744px;" width="13" height="8" viewBox="0 0 13 8"><path d="M0.8 7L6.5 1.2 12.2 7" fill="none" stroke="#111" stroke-width="1.3"/></svg>
<svg style="position:absolute;left:1175px;top:741px;" width="17" height="13" viewBox="0 0 17 13"><path d="M2 0v3M5 0v3M0.5 3h6v2.5a3 3 0 0 1-6 0z" fill="#111"/><path d="M3.5 8v3" stroke="#111"/><rect x="4.5" y="5" width="11" height="7" fill="none" stroke="#111" stroke-width="1.2"/><rect x="6" y="6.5" width="8" height="4" fill="#111"/><rect x="15.5" y="7" width="1.5" height="3" fill="#111"/></svg>
<svg style="position:absolute;left:1199px;top:740px;" width="17" height="16" viewBox="0 0 17 16"><path d="M1 5.5h3l4-4v13l-4-4H1z" fill="none" stroke="#111" stroke-width="1.2"/><path d="M10.5 5.5c1 1.5 1 3.5 0 5M12.8 3.5c2 2.5 2 6.5 0 9M15 1.5c3 3.5 3 9.5 0 13" fill="none" stroke="#111" stroke-width="1.2"/></svg>
<svg style="position:absolute;left:1226px;top:741px;" width="13" height="13" viewBox="0 0 13 13"><path d="M1 12a11 11 0 0 1 11-11M3.8 12a8.2 8.2 0 0 1 8.2-8.2M6.6 12A5.4 5.4 0 0 1 12 6.6" fill="none" stroke="#111" stroke-width="1.2"/><circle cx="10.5" cy="10.5" r="1.7" fill="#111"/></svg>
<svg style="position:absolute;left:1325px;top:740px;" width="25" height="24" viewBox="0 0 25 24"><path d="M0.5 0.5h15v10H5.5l-3.5 3v-3H0.5z" fill="#111"/><path d="M3 3.5h10M3 6h10M3 8.5h7" stroke="#e8dcd3" stroke-width="1.1"/><circle cx="15.5" cy="15.3" r="7.7" fill="#cfcfcf" stroke="#6a6a6a" stroke-width="1.1"/><text x="11.8" y="19.5" font-size="11" font-weight="700" fill="#222" font-family="Liberation Sans">4</text></svg>
<div style="position:absolute;left:1360px;top:728px;width:1px;height:40px;background:#bdb3ae;"></div>
<div class="t" style="left:249.20px;top:11.20px;font-size:13px;color:#ffffff;font-family:'Liberation Sans';transform:scaleX(0.9052);transform-origin:0 0;">GROUP 22_111204-1 [Compatibility Mode]  -  Word</div>
<div class="t" style="left:640.30px;top:10.40px;font-size:12px;color:#b3c3dd;font-family:'Liberation Sans';transform:scaleX(0.9726);transform-origin:0 0;">Drawing Tools</div>
<div class="t" style="left:747.50px;top:10.40px;font-size:12px;color:#b3c3dd;font-family:'Liberation Sans';transform:scaleX(0.9331);transform-origin:0 0;">Picture Tools</div>
<div class="t" style="left:1125.40px;top:9.60px;font-size:13px;color:#2b579a;font-family:'Liberation Sans';transform:scaleX(0.8932);transform-origin:0 0;">Sign in</div>
<div class="t" style="left:19.50px;top:42.40px;font-size:13px;color:#ffffff;font-family:'Liberation Sans';transform:scaleX(0.9028);transform-origin:0 0;">File</div>
<div class="t" style="left:132.10px;top:42.40px;font-size:13px;color:#ffffff;font-family:'Liberation Sans';transform:scaleX(0.8965);transform-origin:0 0;">Insert</div>
<div class="t" style="left:188.41px;top:42.40px;font-size:13px;color:#ffffff;font-family:'Liberation Sans';transform:scaleX(0.8946);transform-origin:0 0;">Design</div>
<div class="t" style="left:251.38px;top:42.40px;font-size:13px;color:#ffffff;font-family:'Liberation Sans';transform:scaleX(0.9214);transform-origin:0 0;">Layout</div>
<div class="t" style="left:314.54px;top:42.40px;font-size:13px;color:#ffffff;font-family:'Liberation Sans';transform:scaleX(0.8609);transform-origin:0 0;">References</div>
<div class="t" style="left:398.66px;top:42.40px;font-size:13px;color:#ffffff;font-family:'Liberation Sans';transform:scaleX(0.9389);transform-origin:0 0;">Mailings</div>
<div class="t" style="left:470.33px;top:42.40px;font-size:13px;color:#ffffff;font-family:'Liberation Sans';transform:scaleX(0.8666);transform-origin:0 0;">Review</div>
<div class="t" style="left:535.20px;top:42.40px;font-size:13px;color:#ffffff;font-family:'Liberation Sans';transform:scaleX(0.8720);transform-origin:0 0;">View</div>
<div class="t" style="left:586.56px;top:42.40px;font-size:13px;color:#ffffff;font-family:'Liberation Sans';transform:scaleX(0.9449);transform-origin:0 0;">Help</div>
<div class="t" style="left:639.00px;top:42.40px;font-size:13px;color:#ffffff;font-family:'Liberation Sans';transform:scaleX(0.8808);transform-origin:0 0;">Shape Format</div>
<div class="t" style="left:738.58px;top:42.40px;font-size:13px;color:#ffffff;font-family:'Liberation Sans';transform:scaleX(0.9157);transform-origin:0 0;">Picture Format</div>
<div class="t" style="left:873.00px;top:42.40px;font-size:13px;color:#ffffff;font-family:'Liberation Sans';transform:scaleX(0.9364);transform-origin:0 0;">Tell me what you want to do</div>
<div class="t" style="left:72.33px;top:42.40px;font-size:13px;color:#2b579a;font-family:'Liberation Sans';transform:scaleX(0.9747);transform-origin:0 0;">Home</div>
<div class="t" style="left:1303.10px;top:43.00px;font-size:13.5px;color:#ffffff;font-family:'Liberation Sans';transform:scaleX(0.9489);transform-origin:0 0;-webkit-text-stroke:0.45px #fff;">Share</div>
<div class="t" style="left:15.60px;top:107.00px;font-size:12px;color:#262626;font-family:'Liberation Sans';transform:scaleX(0.8835);transform-origin:0 0;">Paste</div>
<div class="t" style="left:72.50px;top:73.20px;font-size:12px;color:#262626;font-family:'Liberation Sans';transform:scaleX(0.9411);transform-origin:0 0;">Cut</div>
<div class="t" style="left:72.50px;top:95.60px;font-size:12px;color:#262626;font-family:'Liberation Sans';transform:scaleX(0.9817);transform-origin:0 0;">Copy</div>
<div class="t" style="left:72.50px;top:118.75px;font-size:12px;color:#a6a6a6;font-family:'Liberation Sans';transform:scaleX(0.9727);transform-origin:0 0;">Format Painter</div>
<div class="t" style="left:48.40px;top:141.80px;font-size:12px;color:#262626;font-family:'Liberation Sans';transform:scaleX(0.9903);transform-origin:0 0;">Clipboard</div>
<div class="t" style="left:176.50px;top:81.00px;font-size:12px;color:#1e1e1e;font-family:'Liberation Sans';transform:scaleX(0.9987);transform-origin:0 0;">Calibri</div>
<div class="t" style="left:263.40px;top:81.00px;font-size:12px;color:#1e1e1e;font-family:'Liberation Sans';">9</div>
<div class="t" style="left:311.30px;top:80.00px;font-size:14px;color:#a6a6a6;font-family:'Liberation Sans';transform:scaleX(0.9200);transform-origin:0 0;-webkit-text-stroke:0.3px #a6a6a6;">A</div>
<div class="t" style="left:336.00px;top:83.00px;font-size:11px;color:#a6a6a6;font-family:'Liberation Sans';transform:scaleX(0.9500);transform-origin:0 0;-webkit-text-stroke:0.3px #a6a6a6;">A</div>
<div class="t" style="left:363.00px;top:80.00px;font-size:14px;color:#a6a6a6;font-family:'Liberation Sans';transform:scaleX(0.8594);transform-origin:0 0;-webkit-text-stroke:0.2px #a6a6a6;">Aa</div>
<div class="t" style="left:179.80px;top:111.00px;font-size:12px;color:#444;font-family:'Liberation Sans';font-weight:700;transform:scaleX(0.8000);transform-origin:0 0;">B</div>
<div class="t" style="left:204.50px;top:110.00px;font-size:13px;color:#444;font-family:'Liberation Serif';font-style:italic;">I</div>
<div class="t" style="left:227.00px;top:111.00px;font-size:12px;color:#a6a6a6;font-family:'Liberation Sans';">U</div>
<div class="t" style="left:262.80px;top:111.00px;font-size:12px;color:#555;font-family:'Liberation Sans';transform:scaleX(0.8373);transform-origin:0 0;">abc</div>
<div class="t" style="left:289.00px;top:110.00px;font-size:13px;color:#444;font-family:'Liberation Sans';font-weight:700;">x</div>
<div class="t" style="left:297.00px;top:118.00px;font-size:7px;color:#3f7cc0;font-family:'Liberation Sans';font-weight:700;">2</div>
<div class="t" style="left:312.90px;top:110.00px;font-size:13px;color:#444;font-family:'Liberation Sans';font-weight:700;">x</div>
<div class="t" style="left:321.00px;top:110.00px;font-size:7px;color:#3f7cc0;font-family:'Liberation Sans';font-weight:700;">2</div>
<div class="t" style="left:383.60px;top:110.50px;font-size:12.5px;color:#555;font-family:'Liberation Sans';font-weight:700;transform:scaleX(0.9889);transform-origin:0 0;">A</div>
<div class="t" style="left:279.60px;top:141.80px;font-size:12px;color:#262626;font-family:'Liberation Sans';transform:scaleX(0.9361);transform-origin:0 0;">Font</div>
<div class="t" style="left:523.50px;top:141.80px;font-size:12px;color:#262626;font-family:'Liberation Sans';transform:scaleX(0.9392);transform-origin:0 0;">Paragraph</div>
<div class="t" style="left:700.00px;top:84.00px;font-size:15px;color:#7a7a7a;font-family:'Liberation Serif';letter-spacing:0.224px;">AaBbCcI</div>
<div class="t" style="left:704.30px;top:110.70px;font-size:12px;color:#8a8a8a;font-family:'Liberation Sans';letter-spacing:0.059px;">¶ Normal</div>
<div class="t" style="left:772.00px;top:84.00px;font-size:15px;color:#7a7a7a;font-family:'Liberation Serif';letter-spacing:0.224px;">AaBbCcI</div>
<div class="t" style="left:771.00px;top:110.70px;font-size:12px;color:#8a8a8a;font-family:'Liberation Sans';transform:scaleX(0.9440);transform-origin:0 0;">¶ Body Text</div>
<div class="t" style="left:844.00px;top:84.00px;font-size:15px;color:#7a7a7a;font-family:'Liberation Serif';letter-spacing:0.224px;">AaBbCcI</div>
<div class="t" style="left:842.20px;top:110.70px;font-size:12px;color:#8a8a8a;font-family:'Liberation Sans';transform:scaleX(0.9012);transform-origin:0 0;">¶ List Para...</div>
<div class="t" style="left:916.00px;top:84.00px;font-size:15px;color:#7a7a7a;font-family:'Liberation Serif';letter-spacing:0.224px;">AaBbCcI</div>
<div class="t" style="left:914.40px;top:110.70px;font-size:12px;color:#8a8a8a;font-family:'Liberation Sans';transform:scaleX(0.9195);transform-origin:0 0;">¶ No Spac...</div>
<div class="t" style="left:988.00px;top:84.00px;font-size:15px;color:#7a7a7a;font-family:'Liberation Serif';letter-spacing:0.224px;">AaBbCcI</div>
<div class="t" style="left:986.50px;top:110.70px;font-size:12px;color:#8a8a8a;font-family:'Liberation Sans';transform:scaleX(0.9071);transform-origin:0 0;">¶ Table Pa...</div>
<div class="t" style="left:1060.00px;top:84.00px;font-size:15px;color:#7a7a7a;font-family:'Liberation Serif';letter-spacing:0.224px;">AaBbCcI</div>
<div class="t" style="left:1069.60px;top:110.70px;font-size:12px;color:#8a8a8a;font-family:'Liberation Sans';transform:scaleX(0.8491);transform-origin:0 0;">¶ TOC 1</div>
<div class="t" style="left:898.50px;top:141.80px;font-size:12px;color:#262626;font-family:'Liberation Sans';transform:scaleX(0.8569);transform-origin:0 0;">Styles</div>
<div class="t" style="left:1191.30px;top:72.80px;font-size:12px;color:#262626;font-family:'Liberation Sans';transform:scaleX(0.9749);transform-origin:0 0;">Find</div>
<div class="t" style="left:1191.30px;top:95.70px;font-size:12px;color:#262626;font-family:'Liberation Sans';transform:scaleX(0.9176);transform-origin:0 0;">Replace</div>
<div class="t" style="left:1191.30px;top:118.60px;font-size:12px;color:#262626;font-family:'Liberation Sans';transform:scaleX(0.8937);transform-origin:0 0;">Select</div>
<div class="t" style="left:1188.70px;top:141.70px;font-size:12px;color:#262626;font-family:'Liberation Sans';transform:scaleX(0.9940);transform-origin:0 0;">Editing</div>
<div class="t" style="left:1263.00px;top:106.50px;font-size:12px;color:#262626;font-family:'Liberation Sans';letter-spacing:0.185px;">Add-ins</div>
<div class="t" style="left:1264.00px;top:141.70px;font-size:12px;color:#262626;font-family:'Liberation Sans';transform:scaleX(0.9585);transform-origin:0 0;">Add-ins</div>
<div class="t" style="left:40.30px;top:167.10px;font-size:12px;color:#333333;font-family:'Liberation Sans';transform:scaleX(0.9162);transform-origin:0 0;-webkit-text-stroke:0.35px #333;">NEW INSTALL DETECTED</div>
<div class="t" style="left:186.10px;top:167.10px;font-size:12px;color:#333333;font-family:'Liberation Sans';transform:scaleX(0.9841);transform-origin:0 0;">Your new install of Microsoft Office Professional Plus 2016 has newer features than your current version. Do you want to activate the new install?</div>
<div class="t" style="left:969.60px;top:167.10px;font-size:12px;color:#333333;font-family:'Liberation Sans';transform:scaleX(0.8326);transform-origin:0 0;">Yes</div>
<div class="t" style="left:1029.40px;top:167.10px;font-size:12px;color:#333333;font-family:'Liberation Sans';transform:scaleX(0.9530);transform-origin:0 0;">No Thanks</div>
<div class="t" style="left:195.30px;top:194.00px;font-size:9px;color:#444;font-family:'Liberation Sans';">1</div>
<div class="t" style="left:293.70px;top:194.00px;font-size:9px;color:#444;font-family:'Liberation Sans';">1</div>
<div class="t" style="left:342.90px;top:194.00px;font-size:9px;color:#444;font-family:'Liberation Sans';">2</div>
<div class="t" style="left:392.10px;top:194.00px;font-size:9px;color:#444;font-family:'Liberation Sans';">3</div>
<div class="t" style="left:441.30px;top:194.00px;font-size:9px;color:#444;font-family:'Liberation Sans';">4</div>
<div class="t" style="left:490.50px;top:194.00px;font-size:9px;color:#444;font-family:'Liberation Sans';">5</div>
<div class="t" style="left:539.70px;top:194.00px;font-size:9px;color:#444;font-family:'Liberation Sans';">6</div>
<div class="t" style="left:588.90px;top:194.00px;font-size:9px;color:#444;font-family:'Liberation Sans';">7</div>
<div class="t" style="left:638.10px;top:194.00px;font-size:9px;color:#444;font-family:'Liberation Sans';">8</div>
<div class="t" style="left:687.30px;top:194.00px;font-size:9px;color:#444;font-family:'Liberation Sans';">9</div>
<div class="t" style="left:734.00px;top:194.00px;font-size:9px;color:#444;font-family:'Liberation Sans';">10</div>
<div class="t" style="left:783.53px;top:194.00px;font-size:9px;color:#444;font-family:'Liberation Sans';">11</div>
<div class="t" style="left:832.40px;top:194.00px;font-size:9px;color:#444;font-family:'Liberation Sans';">12</div>
<div class="t" style="left:881.60px;top:194.00px;font-size:9px;color:#444;font-family:'Liberation Sans';">13</div>
<div class="t" style="left:930.80px;top:194.00px;font-size:9px;color:#444;font-family:'Liberation Sans';">14</div>
<div class="t" style="left:980.00px;top:194.00px;font-size:9px;color:#444;font-family:'Liberation Sans';">15</div>
<div class="t" style="left:1029.20px;top:194.00px;font-size:9px;color:#444;font-family:'Liberation Sans';">16</div>
<div class="t" style="left:1078.40px;top:194.00px;font-size:9px;color:#444;font-family:'Liberation Sans';">17</div>
<div class="t" style="left:1127.60px;top:194.00px;font-size:9px;color:#444;font-family:'Liberation Sans';">18</div>
<div class="t" style="left:1176.80px;top:194.00px;font-size:9px;color:#444;font-family:'Liberation Sans';">19</div>
<div class="t" style="left:390.20px;top:313.90px;font-size:14px;color:#595959;font-family:'Liberation Sans';transform:scaleX(0.9860);transform-origin:0 0;">0.8</div>
<div class="t" style="left:390.20px;top:343.00px;font-size:14px;color:#595959;font-family:'Liberation Sans';transform:scaleX(0.9860);transform-origin:0 0;">0.7</div>
<div class="t" style="left:390.20px;top:372.00px;font-size:14px;color:#595959;font-family:'Liberation Sans';transform:scaleX(0.9860);transform-origin:0 0;">0.6</div>
<div class="t" style="left:390.20px;top:401.90px;font-size:14px;color:#595959;font-family:'Liberation Sans';transform:scaleX(0.9860);transform-origin:0 0;">0.5</div>
<div class="t" style="left:390.20px;top:431.60px;font-size:14px;color:#595959;font-family:'Liberation Sans';transform:scaleX(0.9860);transform-origin:0 0;">0.4</div>
<div class="t" style="left:390.20px;top:462.00px;font-size:14px;color:#595959;font-family:'Liberation Sans';transform:scaleX(0.9860);transform-origin:0 0;">0.3</div>
<div class="t" style="left:390.20px;top:491.00px;font-size:14px;color:#595959;font-family:'Liberation Sans';transform:scaleX(0.9860);transform-origin:0 0;">0.2</div>
<div class="t" style="left:390.40px;top:520.70px;font-size:14px;color:#595959;font-family:'Liberation Sans';transform:scaleX(0.9097);transform-origin:0 0;">0.1</div>
<div class="t" style="left:402.40px;top:551.75px;font-size:14px;color:#595959;font-family:'Liberation Sans';transform:scaleX(0.9750);transform-origin:0 0;">0</div>
<div class="t" style="left:385.20px;top:578.00px;font-size:14px;color:#595959;font-family:'Liberation Sans';transform:scaleX(0.9615);transform-origin:0 0;">-0.1</div>
<div class="t" style="left:299.20px;top:571.90px;font-size:14px;color:#595959;font-family:'Liberation Sans';transform:scaleX(0.9861);transform-origin:0 0;">-0.5</div>
<div class="t" style="left:420.30px;top:567.50px;font-size:14px;color:#595959;font-family:'Liberation Sans';transform:scaleX(0.9125);transform-origin:0 0;">0</div>
<div class="t" style="left:527.00px;top:571.90px;font-size:14px;color:#595959;font-family:'Liberation Sans';transform:scaleX(0.9758);transform-origin:0 0;">0.5</div>
<div class="t" style="left:644.41px;top:571.90px;font-size:14px;color:#595959;font-family:'Liberation Sans';transform:scaleX(0.9857);transform-origin:0 0;">1</div>
<div class="t" style="left:751.71px;top:571.90px;font-size:14px;color:#595959;font-family:'Liberation Sans';transform:scaleX(0.9906);transform-origin:0 0;">1.5</div>
<div class="t" style="left:810.70px;top:260.90px;font-size:14px;color:#595959;font-family:'Liberation Sans';letter-spacing:0.397px;">No Inhibitor</div>
<div class="t" style="left:811.70px;top:288.90px;font-size:14px;color:#595959;font-family:'Liberation Sans';letter-spacing:0.138px;">C. albidum</div>
<div class="t" style="left:12.40px;top:712.10px;font-size:11.5px;color:#444;font-family:'Liberation Sans';transform:scaleX(0.9562);transform-origin:0 0;">Page 28 of 39</div>
<div class="t" style="left:100.30px;top:712.10px;font-size:11.5px;color:#444;font-family:'Liberation Sans';transform:scaleX(0.9715);transform-origin:0 0;">6467 words</div>
<div class="t" style="left:210.50px;top:712.10px;font-size:11.5px;color:#444;font-family:'Liberation Sans';transform:scaleX(0.9772);transform-origin:0 0;">English (United States)</div>
<div class="t" style="left:363.60px;top:712.10px;font-size:11.5px;color:#444;font-family:'Liberation Sans';transform:scaleX(0.9812);transform-origin:0 0;">Accessibility: Investigate</div>
<div class="t" style="left:1331.80px;top:712.10px;font-size:11.5px;color:#444;font-family:'Liberation Sans';transform:scaleX(0.8874);transform-origin:0 0;">130%</div>
<div class="t" style="left:1264.10px;top:732.80px;font-size:12px;color:#111;font-family:'Liberation Sans';transform:scaleX(0.8895);transform-origin:0 0;">09:17</div>
<div class="t" style="left:1249.40px;top:750.80px;font-size:12px;color:#111;font-family:'Liberation Sans';transform:scaleX(0.9539);transform-origin:0 0;">24/10/2025</div>
</body></html>
